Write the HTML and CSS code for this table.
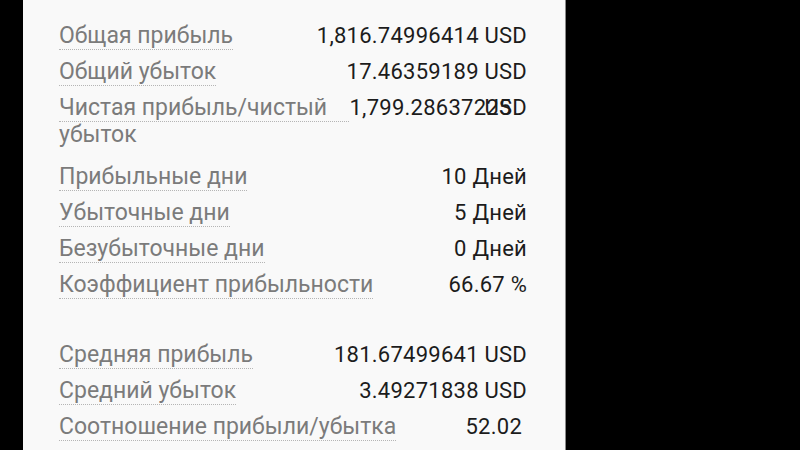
FILE: index.html
```html
<!DOCTYPE html>
<html lang="ru">
<head>
  <meta charset="UTF-8">
  <meta name="viewport" content="width=device-width, initial-scale=1.0">
  <title>Статистика PnL</title>
  <link rel="stylesheet" href="styles.css">
</head>
<body>
  <div class="panel">
    <div class="group">
      <div class="row">
        <div class="label">Общая прибыль</div>
        <div class="value">1,816.74996414 USD</div>
      </div>
      <div class="row">
        <div class="label">Общий убыток</div>
        <div class="value">17.46359189 USD</div>
      </div>
      <div class="row">
        <div class="label">Чистая прибыль/чистый убыток</div>
        <div class="value"><span>1,799.28637225</span><span class="unit-over">USD</span></div>
      </div>
    </div>

    <div class="group group-days">
      <div class="row">
        <div class="label">Прибыльные дни</div>
        <div class="value">10 Дней</div>
      </div>
      <div class="row">
        <div class="label">Убыточные дни</div>
        <div class="value">5 Дней</div>
      </div>
      <div class="row">
        <div class="label">Безубыточные дни</div>
        <div class="value">0 Дней</div>
      </div>
      <div class="row">
        <div class="label">Коэффициент прибыльности</div>
        <div class="value">66.67 %</div>
      </div>
    </div>

    <div class="group group-avg">
      <div class="row">
        <div class="label">Средняя прибыль</div>
        <div class="value">181.67499641 USD</div>
      </div>
      <div class="row">
        <div class="label">Средний убыток</div>
        <div class="value">3.49271838 USD</div>
      </div>
      <div class="row">
        <div class="label">Соотношение прибыли/убытка</div>
        <div class="value ratio">52.02</div>
      </div>
    </div>
  </div>
</body>
</html>
```

FILE: styles.css
```css
/* Page: black letterbox around the panel */
body {
  margin: 0;
  background-color: #000;
  font-family: Roboto, "Noto Sans", sans-serif;
}

.panel {
  margin-left: 23px;
  width: 543px;
  height: 450px;
  box-sizing: border-box;
  padding: 22px 38px 0 36px;
  background-color: #f9f9f9;
  border-right: 1px solid #8a8a8a;
  overflow: hidden;
}

/* Rows */
.group {
  margin-bottom: 41px;
}

.group-days {
  margin-bottom: 42px;
}

.row {
  display: flex;
  justify-content: space-between;
  align-items: flex-start;
  margin-bottom: 8px;
}

.label {
  height: 27px;
  font-size: 23px;
  line-height: 27px;
  color: #7b7b7b;
  border-bottom: 1px dotted #b5b5b5;
}

.value {
  display: flex;
  flex: none;
  font-size: 22px;
  line-height: 27px;
  letter-spacing: 0.25px;
  color: #1c1c1c;
}

.unit-over {
  margin-left: -27px;
}

.ratio {
  padding-right: 5px;
}
```
